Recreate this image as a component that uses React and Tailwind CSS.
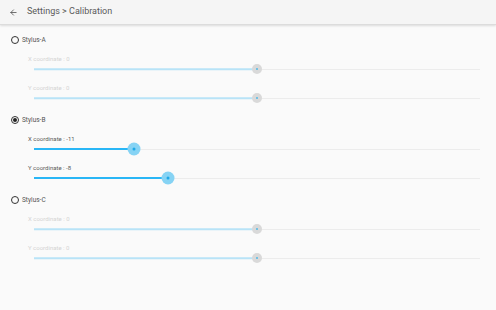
import React from 'react';
import { ArrowLeft } from 'lucide-react';

const MIN = -20;
const MAX = 20;

const styluses = [
  { name: 'Stylus-A', active: false, x: 0, y: 0 },
  { name: 'Stylus-B', active: true, x: -11, y: -8 },
  { name: 'Stylus-C', active: false, x: 0, y: 0 },
];

function Slider({ label, value, active }) {
  const pct = ((value - MIN) / (MAX - MIN)) * 100;
  return (
    <div className="pt-[8px] pb-[1px]">
      <div
        className={`h-[8px] flex items-center pl-[28px] text-[6px] leading-none ${
          active ? 'text-[#5a5a5a]' : 'text-[#d4d4d4]'
        }`}
      >
        {label} : {value}
      </div>
      <div className="h-[12px] flex items-center pl-[34px] pr-[16px]">
        <div className="relative w-full h-[1px] bg-[#ececec]">
          <div
            className={`absolute left-0 top-1/2 -translate-y-1/2 ${
              active ? 'h-[2px] bg-[#29b6f6]' : 'h-[1.5px] bg-[#b8e3f7]'
            }`}
            style={{ width: `${pct}%` }}
          />
          <div
            className={`absolute top-1/2 -translate-x-1/2 -translate-y-1/2 rounded-full flex items-center justify-center ${
              active ? 'w-[13px] h-[13px] bg-[#86d3f4]' : 'w-[10px] h-[10px] bg-[#d9d9d9]'
            }`}
            style={{ left: `${pct}%` }}
          >
            <div
              className={`rounded-full ${
                active ? 'w-[3px] h-[3px] bg-[#1ea8e8]' : 'w-[2px] h-[2px] bg-[#4fb8e6]'
              }`}
            />
          </div>
        </div>
      </div>
    </div>
  );
}

export default function App() {
  return (
    <div
      className="w-[496px] h-[310px] bg-[#fafafa] overflow-hidden"
      style={{ fontFamily: 'Roboto, "Liberation Sans", sans-serif' }}
    >
      {/* Toolbar */}
      <div className="h-[25px] bg-[#f5f5f5] border-b border-[#dcdcdc] shadow-[0_1px_2px_rgba(0,0,0,0.12)] flex items-center pl-[9px] gap-[9px]">
        <ArrowLeft size={9} strokeWidth={2} className="text-[#444]" />
        <span className="text-[9px] text-[#5a5a5a]">Settings &gt; Calibration</span>
      </div>

      {/* Stylus list */}
      <div className="pt-[8px] flex flex-col gap-[8px]">
        {styluses.map((s) => (
          <div key={s.name}>
            <div className="h-[14px] flex items-center pl-[11px] gap-[3px]">
              <div className="w-[8px] h-[8px] rounded-full border-[1.5px] border-[#333] flex items-center justify-center">
                {s.active && <div className="w-[4px] h-[4px] rounded-full bg-[#222]" />}
              </div>
              <span className="text-[6.5px] text-[#555] leading-none">{s.name}</span>
            </div>
            <Slider label="X coordinate" value={s.x} active={s.active} />
            <Slider label="Y coordinate" value={s.y} active={s.active} />
          </div>
        ))}
      </div>
    </div>
  );
}
